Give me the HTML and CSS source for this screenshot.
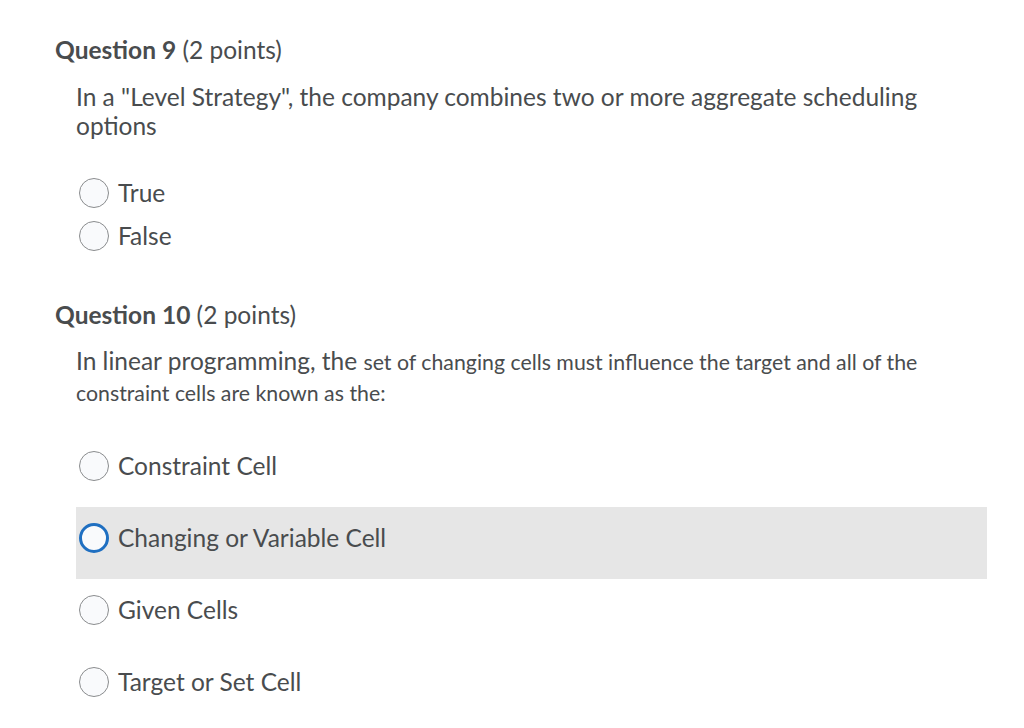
FILE: index.html
```html
<!DOCTYPE html>
<html>
<head>
<meta charset="utf-8">
<link rel="stylesheet" href="styles.css">
</head>
<body>
<div class="page">
  <section class="question q9">
    <h2 class="q-title"><b>Question 9</b> (2 points)</h2>
    <p class="q-text">In a "Level Strategy", the company combines two or more aggregate scheduling options</p>
    <div class="options compact">
      <div class="opt"><span class="radio"></span><span class="label">True</span></div>
      <div class="opt"><span class="radio"></span><span class="label">False</span></div>
    </div>
  </section>
  <section class="question q10">
    <h2 class="q-title"><b>Question 10</b> (2 points)</h2>
    <p class="q-text q-text-mixed"><span class="big">In linear programming, the </span><span class="small">set of changing cells must influence the target and all of the</span><br><span class="small">constraint cells are known as the:</span></p>
    <div class="options tall">
      <div class="opt"><span class="radio"></span><span class="label">Constraint Cell</span></div>
      <div class="opt hover"><span class="radio focus"></span><span class="label">Changing or Variable Cell</span></div>
      <div class="opt"><span class="radio"></span><span class="label">Given Cells</span></div>
      <div class="opt"><span class="radio"></span><span class="label">Target or Set Cell</span></div>
    </div>
  </section>
</div>
</body>
</html>
```

FILE: styles.css
```css
html, body {
  margin: 0;
  padding: 0;
  background: #ffffff;
}
body {
  font-family: Lato, "Noto Sans", sans-serif;
  color: #494c4e;
}
.page {
  padding: 36px 37px 0 55px;
}
.q-title {
  margin: 0;
  font-size: 24.5px;
  line-height: 28px;
  font-weight: 400;
}
.q-title b {
  font-weight: 700;
}
.q-text {
  margin: 0;
  padding-left: 21px;
  font-size: 24.5px;
  line-height: 29px;
}
.q9 .q-text {
  margin-top: 18px;
  padding-right: 40px;
}
.q9 .options {
  margin-top: 38px;
}
.options {
  display: flex;
  flex-direction: column;
}
.opt {
  display: flex;
  align-items: center;
  gap: 9px;
  padding-left: 24px;
}
.compact .opt {
  height: 43px;
  align-items: flex-start;
}
.radio {
  box-sizing: border-box;
  width: 30px;
  height: 30px;
  border-radius: 50%;
  border: 1.5px solid #8a8c8e;
  background: #f9fafc;
  flex: none;
}
.radio.focus {
  border: 3px solid #1f6fc1;
}
.label {
  font-size: 24.5px;
  line-height: 30px;
}
.q10 {
  margin-top: 37px;
}
.q10 .q-text {
  margin-top: 17px;
  line-height: 30px;
}
.q-text-mixed .small {
  font-size: 21.3px;
}
.q10 .options {
  margin-top: 27px;
  margin-left: 21px;
  width: 911px;
}
.tall .opt {
  height: 72px;
  align-items: flex-start;
  padding-top: 16px;
  padding-left: 3px;
  box-sizing: border-box;
}
.opt.hover {
  background: #e6e6e6;
}
```
